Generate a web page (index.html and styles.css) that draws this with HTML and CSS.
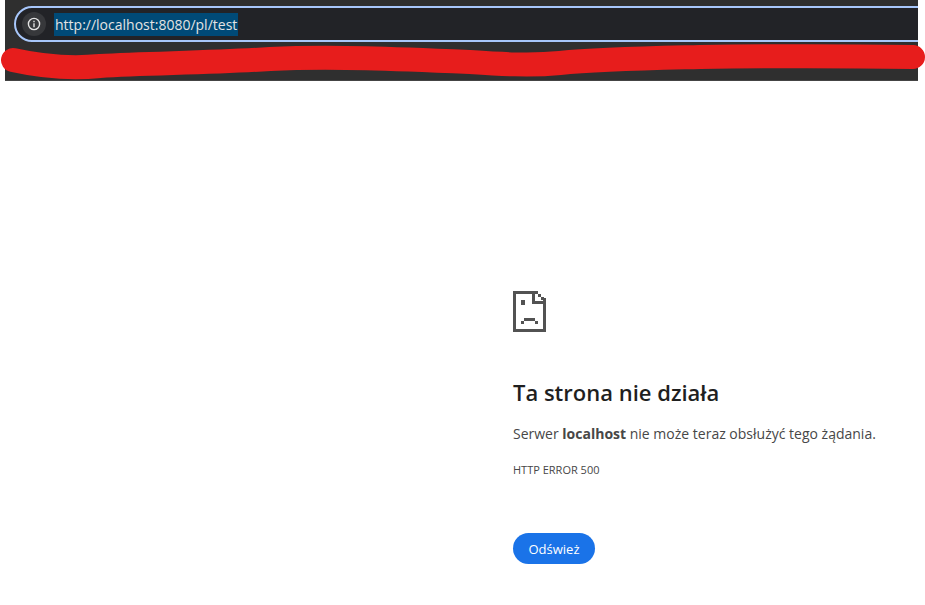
FILE: index.html
```html
<!DOCTYPE html>
<html lang="pl">
<head>
    <meta charset="UTF-8">
    <title>localhost</title>
    <link rel="stylesheet" href="styles.css">
</head>
<body>

    <!-- Pasek adresu -->
    <div class="browser-bar">
        <div class="omnibox">
            <span class="site-info">
                <svg width="14" height="14" viewBox="0 0 14 14" fill="none" stroke="#e3e3e3" stroke-width="1.4">
                    <circle cx="7" cy="7" r="5.6"/>
                    <path d="M7 6.2V10.2M7 3.8V5.2"/>
                </svg>
            </span>
            <span class="url">http://localhost:8080/pl/test</span>
        </div>
    </div>

    <!-- Zamazany fragment -->
    <svg class="scribble" width="925" height="40" viewBox="0 0 925 40" fill="none">
        <path d="M13 18C40 24 70 27 100 24C150 21 210 21 270 17C330 14 400 17 470 20C500 22 530 24 560 21C600 17 660 16 700 15C760 14 850 14 913 15" stroke="#e71d1c" stroke-width="24" stroke-linecap="round" stroke-linejoin="round"/>
    </svg>

    <div class="error-page">
        <svg class="sad-file" width="34" height="41" viewBox="0 0 34 41" fill="#525252" shape-rendering="crispEdges">
            <path d="M0 0H25V3H22V10H30V7H33V41H0ZM3 3V38H30V13H19V3Z"/>
            <path d="M25 3H28V6H25ZM28 6H31V9H28Z"/>
            <path d="M8 9H12V14H8ZM11 27H22V30H11ZM8 30H11V33H8ZM22 30H25V33H22Z"/>
        </svg>
        <h1>Ta strona nie działa</h1>
        <p class="message">Serwer <b>localhost</b> nie może teraz obsłużyć tego żądania.</p>
        <p class="error-code">HTTP ERROR 500</p>
        <button class="reload-btn">Odśwież</button>
    </div>

</body>
</html>
```

FILE: styles.css
```css
body {
    margin: 0;
    background: #ffffff;
    font-family: "Open Sans", "Noto Sans", sans-serif;
    overflow: hidden;
}

.browser-bar {
    margin-left: 5px;
    width: 913px;
    height: 81px;
    box-sizing: border-box;
    padding: 6px 0 0 9px;
    background: #2f2f2f;
    border-bottom: 1px solid #444444;
    overflow: hidden;
}

.omnibox {
    display: flex;
    align-items: center;
    width: 1000px;
    height: 36px;
    box-sizing: border-box;
    padding-left: 6px;
    background: #222327;
    border: 2px solid #a8c7fa;
    border-radius: 18px;
}

.site-info {
    display: flex;
    align-items: center;
    justify-content: center;
    width: 24px;
    height: 24px;
    border-radius: 50%;
    background: #37383b;
}

.url {
    margin-left: 8px;
    padding: 0 1px;
    background: #004a77;
    color: #e3e3e3;
    font-size: 14px;
    line-height: 23px;
}

.scribble {
    position: absolute;
    left: 0;
    top: 42px;
}

.error-page {
    display: flex;
    flex-direction: column;
    align-items: flex-start;
    padding: 210px 0 0 513px;
}

.sad-file {
    display: block;
}

h1 {
    margin: 44px 0 0;
    color: #1f1f1f;
    font-size: 22px;
    font-weight: 600;
    line-height: 32px;
}

.message {
    margin: 15px 0 0;
    color: #474747;
    font-size: 14px;
    line-height: 22px;
}

.error-code {
    margin: 17px 0 0;
    color: #474747;
    font-size: 11px;
    line-height: 16px;
}

.reload-btn {
    margin-top: 55px;
    width: 82px;
    height: 31px;
    padding: 0;
    border: none;
    border-radius: 16px;
    background: #1a73e8;
    color: #ffffff;
    font-family: inherit;
    font-size: 13px;
    font-weight: 500;
}
```
